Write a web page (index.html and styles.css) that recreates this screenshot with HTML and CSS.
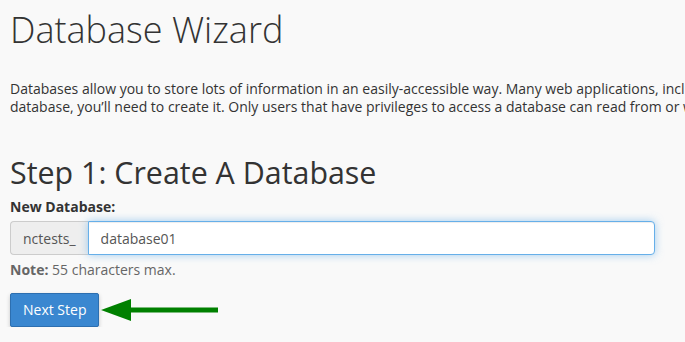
FILE: index.html
```html
<!DOCTYPE html>
<html lang="en">
<head>
    <meta charset="UTF-8">
    <title>Database Wizard</title>
    <link rel="stylesheet" href="styles.css">
</head>
<body>
    <div class="container">
        <h1>Database Wizard</h1>

        <p class="intro">
            Databases allow you to store lots of information in an easily-accessible way. Many web applications, including bulletin boards, content management systems, and others, require a<br>
            database, you’ll need to create it. Only users that have privileges to access a database can read from or write to that database.
        </p>

        <h2>Step 1: Create A Database</h2>

        <form class="step-form" onsubmit="return false">
            <label class="field-label" for="dbName">New Database:</label>
            <div class="input-group">
                <span class="input-addon">nctests_</span>
                <input class="form-control" id="dbName" type="text" value="database01">
            </div>
            <div class="help-text"><strong>Note:</strong> 55 characters max.</div>

            <div class="actions">
                <button class="btn-primary" type="submit">Next Step</button>
                <!-- pointer arrow -->
                <svg class="pointer" width="118" height="24" viewBox="0 0 118 24">
                    <polygon points="0,12 30,1 30,23" fill="#008000"/>
                    <rect x="28" y="9.5" width="89" height="5" fill="#008000"/>
                </svg>
            </div>
        </form>
    </div>
</body>
</html>
```

FILE: styles.css
```css
html, body {
    margin: 0;
    padding: 0;
    overflow: hidden;
}

body {
    font-family: 'Open Sans', 'Liberation Sans', sans-serif;
    background: #f9f9f9;
    color: #333;
    font-size: 14px;
}

.container {
    width: 1200px;
    padding: 0 10px;
}

h1 {
    font-weight: 300;
    font-size: 36px;
    line-height: 40px;
    margin: 10px 0 0 0;
}

.intro {
    margin: 30px 0 0 0;
    line-height: 18px;
    white-space: nowrap;
}

h2 {
    font-weight: 400;
    font-size: 30.4px;
    line-height: 34px;
    margin: 40px 0 0 0;
}

.step-form {
    margin-top: 7px;
}

.field-label {
    display: block;
    font-weight: 700;
    line-height: 20px;
    margin-bottom: 4px;
}

.input-group {
    display: flex;
    width: 645px;
    height: 34px;
}

.input-addon {
    display: flex;
    align-items: center;
    padding: 0 12px;
    background: #eee;
    border: 1px solid #ccc;
    border-right: none;
    border-radius: 4px 0 0 4px;
    color: #555;
}

.form-control {
    flex: 1;
    font-family: inherit;
    font-size: 14px;
    color: #555;
    padding: 6px 12px;
    border: 1px solid #66afe9;
    border-radius: 0 4px 4px 0;
    outline: none;
    box-shadow: inset 0 1px 1px rgba(0,0,0,0.075), 0 0 8px rgba(102,175,233,0.6);
}

.help-text {
    color: #666;
    margin-top: 5px;
    line-height: 20px;
}

.actions {
    display: flex;
    align-items: center;
    margin-top: 13px;
}

.btn-primary {
    font-family: inherit;
    font-size: 14px;
    color: #fff;
    background: #3a87d0;
    border: 1px solid #2d6fb0;
    border-radius: 2px;
    padding: 7px 12px;
    line-height: 18px;
    box-shadow: 0 2px 4px rgba(0,0,0,0.2);
}

.pointer {
    margin-left: 2px;
}
```
